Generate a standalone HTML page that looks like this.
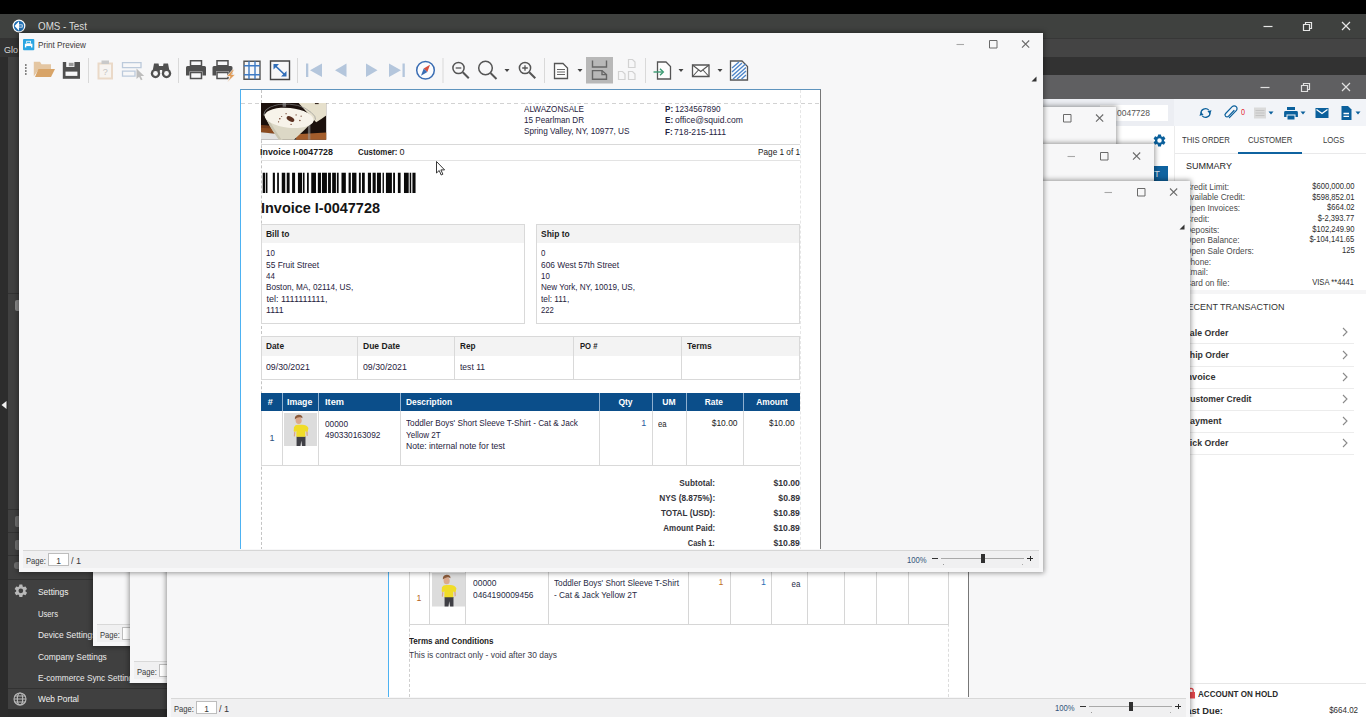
<!DOCTYPE html>
<html>
<head>
<meta charset="utf-8">
<title>OMS - Test</title>
<style>
*{box-sizing:border-box;margin:0;padding:0}
html,body{width:1366px;height:717px;overflow:hidden;background:#2a2a2a}
body{font-family:"Liberation Sans",sans-serif;font-size:11px;color:#222;position:relative}
.a{position:absolute}
.t{position:absolute;white-space:nowrap;line-height:1}
.win{position:absolute;width:1023px;height:539px;background:#f7f7f8;box-shadow:0 0 5px 1px rgba(0,0,0,.4)}
.sb{position:absolute;left:4px;right:4px;bottom:4px;height:18px;background:#f0f0f1;border-top:1px solid #d8d8d8}
.pg{position:absolute;background:#fff}
svg{position:absolute;overflow:visible}
</style>
</head>
<body>
<!-- OMS main window chrome -->
<div class="a" style="left:0px;top:0px;width:1366px;height:14px;background:#000;"></div>
<div class="a" style="left:0px;top:14px;width:1366px;height:24px;background:#3f413f;"></div>
<div class="a" style="left:0px;top:38px;width:1366px;height:19.5px;background:#444;"></div>
<div class="a" style="left:0px;top:38px;width:1366px;height:1px;background:#373737;"></div>
<div class="a" style="left:0px;top:38px;width:40px;height:19px;background:#333;"></div>
<div class="a" style="left:0px;top:57px;width:1366px;height:18px;background:#323232;"></div>
<div class="a" style="left:0px;top:75px;width:1366px;height:24px;background:#5f5f61;"></div>
<div class="a" style="left:1043px;top:99px;width:131px;height:27px;background:#eceef3;"></div>
<div class="a" style="left:1174px;top:99px;width:192px;height:27px;background:#f2f4f8;"></div>
<svg style="left:12px;top:19px" width="14" height="14" viewBox="0 0 14 14"><circle cx="7" cy="7" r="6.4" fill="#fff"/><circle cx="7" cy="7" r="5.2" fill="#1f6fb4"/><path d="M7 2.2 L2.6 7 L7 11.8 L7 8.6 L10.6 8.6 L10.6 5.4 L7 5.4 Z" fill="#fff"/><path d="M7.2 6.2h2.6v1.6H7.2z" fill="#1f6fb4"/></svg>
<div class="t" style="top:21.8px;font-size:10.2px;color:#dedede;left:38.0px;transform:scaleX(0.964);transform-origin:0 50%;">OMS - Test</div>
<div class="t" style="top:44.9px;font-size:9.5px;color:#d8d8d8;left:4.0px;transform:scaleX(0.947);transform-origin:0 50%;">Glo</div>
<svg style="left:1255px;top:16px" width="105" height="20" viewBox="0 0 105 20" fill="none" stroke="#e6e6e6" stroke-width="1.2">
<path d="M8.5 10.5h9"/><path d="M48.500 8.500h6v6h-6z M50.500 8.500v-2h6v6h-2"/><path d="M87 6l8 8M95 6l-8 8"/></svg>
<svg style="left:1252px;top:77px" width="108" height="20" viewBox="0 0 108 20" fill="none" stroke="#e0e0e0" stroke-width="1.2">
<path d="M8.500 10.500h9"/><path d="M49.500 8.500h6v6h-6z M51.500 8.500v-2h6v6h-2"/><path d="M90 6l8 8M98 6l-8 8"/></svg>
<div class="a" style="left:1100px;top:105px;width:68px;height:16px;background:#fff;"></div>
<div class="t" style="top:108.4px;font-size:9.5px;color:#555;left:1117.0px;transform:scaleX(0.892);transform-origin:0 50%;">0047728</div>
<svg style="left:1196px;top:103px" width="170" height="20" viewBox="0 0 170 20">
 <g fill="none" stroke="#0b609c" stroke-width="1.200"><path d="M5 10.500a4.500 4.300 0 0 1 7.800-3.400"/><path d="M14 9.500a4.500 4.300 0 0 1-7.800 3.400"/></g>
 <path d="M15.600 7.200l-1.600 4-2.600-3.200z M3.400 12.800l1.600-4 2.600 3.200z" fill="#0b609c"/>
 <path d="M38 7.500l-5.600 5.800a1.900 1.900 0 0 1-2.800-2.800l6.600-6.800a2.800 2.800 0 0 1 4 4l-6.800 7" fill="none" stroke="#0b609c" stroke-width="1.200" stroke-linecap="round"/>
 <path d="M58 4.500h12v11H58z" fill="#dadada"/><path d="M59.500 7.500h9M59.500 10h9M59.500 12.500h9" stroke="#c4c4c4" stroke-width="1.100"/>
 <path d="M72.500 8.500h5l-2.500 3z" fill="#0b609c"/>
 <path d="M89.500 8h11a1.400 1.400 0 0 1 1.400 1.400v4.600h-2.400v-2.500h-9v2.500h-2.400v-4.600a1.400 1.400 0 0 1 1.400-1.400z M91 4h8v3h-8z M91.500 12.500h7v4h-7z" fill="#0b609c"/>
 <path d="M104.500 8.500h5l-2.500 3z" fill="#0b609c"/>
 <path d="M119.500 5h13v10h-13z" fill="#0b609c"/><path d="M120.500 6.500l5.500 4 5.500-4" stroke="#fff" stroke-width="1.300" fill="none"/>
 <path d="M145.500 3h6.500l3.500 3.500v10.500h-10z" fill="#0b609c"/><path d="M147.500 10.500h5.500M147.500 13.300h5.500" stroke="#fff" stroke-width="1.300"/>
 <path d="M159.500 8.500h5l-2.500 3z" fill="#0b609c"/>
</svg>
<div class="t" style="top:108.3px;font-size:8.5px;color:#e3262e;left:1240.5px;transform:scaleX(0.850);transform-origin:0 50%;">0</div>
<!-- left sidebar -->
<div class="a" style="left:0px;top:57px;width:8px;height:660px;background:#2c2c2c;"></div>
<div class="a" style="left:8px;top:57px;width:160px;height:652px;background:#404040;"></div>
<div class="a" style="left:8px;top:709px;width:160px;height:8px;background:#2b2b2b;"></div>
<div class="a" style="left:8px;top:578.5px;width:122px;height:1px;background:#323232;"></div>
<div class="a" style="left:8px;top:688px;width:160px;height:1px;background:#323232;"></div>
<div class="a" style="left:8px;top:293px;width:12px;height:1px;background:#323232;"></div>
<div class="a" style="left:8px;top:508.5px;width:12px;height:1px;background:#323232;"></div>
<div class="a" style="left:8px;top:532px;width:12px;height:1px;background:#323232;"></div>
<div class="a" style="left:8px;top:555.3px;width:12px;height:1px;background:#323232;"></div>
<svg style="left:0;top:400px" width="8" height="10" viewBox="0 0 8 10"><path d="M6.500 1v8L1.500 5z" fill="#f0f0f0"/></svg>
<div class="a" style="left:14.5px;top:299.5px;width:5px;height:11px;background:#8a8a8a;border-radius:2px 0 0 2px"></div>
<div class="a" style="left:15px;top:516px;width:4px;height:11px;background:#6f6f6f;border-radius:2px 0 0 2px"></div>
<div class="a" style="left:15px;top:539.5px;width:4px;height:10px;background:#6f6f6f;border-radius:2px 0 0 2px"></div>
<div class="a" style="left:14px;top:562px;width:5px;height:7px;background:#6f6f6f;border-radius:3px 0 0 3px"></div>
<svg style="left:13px;top:583.400px" width="15.700" height="15.700" viewBox="0 0 24 24"><path fill="#b9b9b9" d="M19.140 12.940a7.400 7.400 0 0 0 .050-.940 7.400 7.400 0 0 0-.060-.940l2.030-1.580a.490.490 0 0 0 .120-.610l-1.920-3.320a.490.490 0 0 0-.590-.220l-2.390.960a7 7 0 0 0-1.620-.940l-.360-2.540a.480.480 0 0 0-.480-.410h-3.840a.480.480 0 0 0-.470.410l-.360 2.540a7.300 7.300 0 0 0-1.620.940l-2.390-.960a.480.480 0 0 0-.590.220L2.740 8.870a.480.480 0 0 0 .120.610l2.030 1.580a7.400 7.400 0 0 0-.070.940c0 .320.020.640.070.940l-2.030 1.580a.490.490 0 0 0-.120.610l1.920 3.320c.120.220.370.290.590.220l2.390-.960c.500.380 1.030.700 1.620.940l.360 2.540c.050.240.240.410.480.410h3.840c.240 0 .440-.170.470-.410l.360-2.540a7.300 7.300 0 0 0 1.620-.940l2.390.960c.220.080.470 0 .590-.220l1.920-3.320a.480.480 0 0 0-.120-.610zM12 15.600A3.600 3.600 0 1 1 12 8.400a3.600 3.600 0 0 1 0 7.200z"/></svg>
<svg style="left:13px;top:692px" width="14" height="14" viewBox="0 0 14 14" fill="none" stroke="#b9b9b9" stroke-width="1.100"><circle cx="7" cy="7" r="6"/><ellipse cx="7" cy="7" rx="2.700" ry="6"/><path d="M1 7h12M1.800 4h10.400M1.800 10h10.400"/></svg>
<div class="t" style="top:586.8px;font-size:9.6px;color:#f2f2f2;left:38.0px;transform:scaleX(0.879);transform-origin:0 50%;">Settings</div>
<div class="t" style="top:608.8px;font-size:9.4px;color:#ececec;left:38.4px;transform:scaleX(0.815);transform-origin:0 50%;">Users</div>
<div class="t" style="top:630.4px;font-size:9.4px;color:#ececec;left:38.4px;transform:scaleX(0.896);transform-origin:0 50%;">Device Settings</div>
<div class="t" style="top:652.0px;font-size:9.4px;color:#ececec;left:38.4px;transform:scaleX(0.898);transform-origin:0 50%;">Company Settings</div>
<div class="t" style="top:673.1px;font-size:9.4px;color:#ececec;left:38.4px;transform:scaleX(0.878);transform-origin:0 50%;">E-commerce Sync Settings</div>
<div class="t" style="top:694.3px;font-size:9.6px;color:#f2f2f2;left:38.4px;transform:scaleX(0.866);transform-origin:0 50%;">Web Portal</div>
<!-- order window right panel -->
<div class="a" style="left:1043px;top:126px;width:131px;height:591px;background:#fff;"></div>
<div class="a" style="left:1174px;top:126px;width:192px;height:591px;background:#fff;"></div>
<div class="a" style="left:1174px;top:126px;width:1px;height:591px;background:#ececec;"></div>
<svg style="left:1152px;top:133px" width="15" height="15" viewBox="0 0 24 24"><path fill="#0b609c" d="M19.140 12.940a7.400 7.400 0 0 0 .050-.940 7.400 7.400 0 0 0-.060-.940l2.030-1.580a.490.490 0 0 0 .120-.610l-1.920-3.320a.490.490 0 0 0-.590-.220l-2.390.960a7 7 0 0 0-1.620-.940l-.360-2.540a.480.480 0 0 0-.480-.410h-3.840a.480.480 0 0 0-.470.410l-.360 2.540a7.300 7.300 0 0 0-1.620.940l-2.390-.960a.480.480 0 0 0-.590.220L2.740 8.870a.480.480 0 0 0 .120.610l2.030 1.580a7.400 7.400 0 0 0-.070.940c0 .320.020.640.070.940l-2.030 1.580a.490.490 0 0 0-.120.610l1.920 3.320c.120.220.370.290.590.220l2.390-.960c.500.380 1.030.700 1.620.940l.360 2.540c.050.240.240.410.480.410h3.840c.240 0 .440-.170.470-.410l.360-2.540a7.300 7.300 0 0 0 1.620-.940l2.390.960c.220.080.470 0 .590-.220l1.920-3.320a.480.480 0 0 0-.120-.610zM12 15.600A3.600 3.600 0 1 1 12 8.400a3.600 3.600 0 0 1 0 7.200z"/></svg>
<div class="a" style="left:1140px;top:166px;width:28px;height:16px;background:#0f63a0;"></div>
<div class="t" style="top:169.4px;font-size:9.5px;color:#dfe9f3;left:1154.0px;">T</div>
<div class="t" style="top:135.0px;font-size:9.4px;color:#3b3b3b;left:1182.4px;transform:scaleX(0.828);transform-origin:0 50%;">THIS ORDER</div>
<div class="t" style="top:135.0px;font-size:9.4px;color:#3b3b3b;left:1248.0px;transform:scaleX(0.830);transform-origin:0 50%;">CUSTOMER</div>
<div class="t" style="top:135.0px;font-size:9.4px;color:#3b3b3b;left:1323.0px;transform:scaleX(0.823);transform-origin:0 50%;">LOGS</div>
<div class="a" style="left:1175px;top:153px;width:191px;height:1px;background:#e9e9ea;"></div>
<div class="a" style="left:1238px;top:152px;width:64px;height:2px;background:#0f63a0;"></div>
<div class="t" style="top:161.2px;font-size:9.8px;color:#262626;left:1186.0px;transform:scaleX(0.921);transform-origin:0 50%;">SUMMARY</div>
<div class="t" style="top:182.7px;font-size:8.3px;color:#4a4a4a;left:1184.5px;transform:scaleX(0.995);transform-origin:0 50%;">Credit Limit:</div>
<div class="t" style="top:182.8px;font-size:8.2px;color:#2d2d2d;right:11.5px;transform:scaleX(0.930);transform-origin:100% 50%;">$600,000.00</div>
<div class="t" style="top:193.4px;font-size:8.3px;color:#4a4a4a;left:1184.5px;transform:scaleX(0.995);transform-origin:0 50%;">Available Credit:</div>
<div class="t" style="top:193.5px;font-size:8.2px;color:#2d2d2d;right:11.5px;transform:scaleX(0.930);transform-origin:100% 50%;">$598,852.01</div>
<div class="t" style="top:204.1px;font-size:8.3px;color:#4a4a4a;left:1184.5px;transform:scaleX(0.995);transform-origin:0 50%;">Open Invoices:</div>
<div class="t" style="top:204.2px;font-size:8.2px;color:#2d2d2d;right:11.5px;transform:scaleX(0.930);transform-origin:100% 50%;">$664.02</div>
<div class="t" style="top:214.8px;font-size:8.3px;color:#4a4a4a;left:1184.5px;transform:scaleX(0.995);transform-origin:0 50%;">Credit:</div>
<div class="t" style="top:214.9px;font-size:8.2px;color:#2d2d2d;right:11.5px;transform:scaleX(0.930);transform-origin:100% 50%;">$-2,393.77</div>
<div class="t" style="top:225.5px;font-size:8.3px;color:#4a4a4a;left:1184.5px;transform:scaleX(0.995);transform-origin:0 50%;">Deposits:</div>
<div class="t" style="top:225.6px;font-size:8.2px;color:#2d2d2d;right:11.5px;transform:scaleX(0.930);transform-origin:100% 50%;">$102,249.90</div>
<div class="t" style="top:236.2px;font-size:8.3px;color:#4a4a4a;left:1184.5px;transform:scaleX(0.995);transform-origin:0 50%;">Open Balance:</div>
<div class="t" style="top:236.3px;font-size:8.2px;color:#2d2d2d;right:11.5px;transform:scaleX(0.930);transform-origin:100% 50%;">$-104,141.65</div>
<div class="t" style="top:246.9px;font-size:8.3px;color:#4a4a4a;left:1184.5px;transform:scaleX(0.995);transform-origin:0 50%;">Open Sale Orders:</div>
<div class="t" style="top:247.0px;font-size:8.2px;color:#2d2d2d;right:11.5px;transform:scaleX(0.930);transform-origin:100% 50%;">125</div>
<div class="t" style="top:257.6px;font-size:8.3px;color:#4a4a4a;left:1184.5px;transform:scaleX(0.995);transform-origin:0 50%;">Phone:</div>
<div class="t" style="top:268.3px;font-size:8.3px;color:#4a4a4a;left:1184.5px;transform:scaleX(0.995);transform-origin:0 50%;">Email:</div>
<div class="t" style="top:279.0px;font-size:8.3px;color:#4a4a4a;left:1184.5px;transform:scaleX(0.995);transform-origin:0 50%;">Card on file:</div>
<div class="t" style="top:279.1px;font-size:8.2px;color:#2d2d2d;right:11.5px;transform:scaleX(0.930);transform-origin:100% 50%;">VISA **4441</div>
<div class="a" style="left:1175px;top:290px;width:191px;height:3.5px;background:#f5f5f6;"></div>
<div class="t" style="top:301.9px;font-size:9.6px;color:#333;left:1180.5px;transform:scaleX(0.936);transform-origin:0 50%;">RECENT TRANSACTION</div>
<div class="t" style="top:327.6px;font-size:9.8px;color:#333;font-weight:bold;left:1184.0px;transform:scaleX(0.894);transform-origin:0 50%;">Sale Order</div>
<svg style="left:1341px;top:327.4px" width="8" height="10" viewBox="0 0 8 10" fill="none" stroke="#8a8a8a" stroke-width="1.1"><path d="M2 1l4 4-4 4"/></svg>
<div class="a" style="left:1182px;top:343.4px;width:172px;height:1px;background:#ececec;"></div>
<div class="t" style="top:349.8px;font-size:9.8px;color:#333;font-weight:bold;left:1184.0px;transform:scaleX(0.889);transform-origin:0 50%;">Ship Order</div>
<svg style="left:1341px;top:349.54999999999995px" width="8" height="10" viewBox="0 0 8 10" fill="none" stroke="#8a8a8a" stroke-width="1.1"><path d="M2 1l4 4-4 4"/></svg>
<div class="a" style="left:1182px;top:365.54999999999995px;width:172px;height:1px;background:#ececec;"></div>
<div class="t" style="top:371.9px;font-size:9.8px;color:#333;font-weight:bold;left:1184.0px;transform:scaleX(0.933);transform-origin:0 50%;">Invoice</div>
<svg style="left:1341px;top:371.7px" width="8" height="10" viewBox="0 0 8 10" fill="none" stroke="#8a8a8a" stroke-width="1.1"><path d="M2 1l4 4-4 4"/></svg>
<div class="a" style="left:1182px;top:387.7px;width:172px;height:1px;background:#ececec;"></div>
<div class="t" style="top:394.1px;font-size:9.8px;color:#333;font-weight:bold;left:1184.0px;transform:scaleX(0.878);transform-origin:0 50%;">Customer Credit</div>
<svg style="left:1341px;top:393.84999999999997px" width="8" height="10" viewBox="0 0 8 10" fill="none" stroke="#8a8a8a" stroke-width="1.1"><path d="M2 1l4 4-4 4"/></svg>
<div class="a" style="left:1182px;top:409.84999999999997px;width:172px;height:1px;background:#ececec;"></div>
<div class="t" style="top:416.2px;font-size:9.8px;color:#333;font-weight:bold;left:1184.0px;transform:scaleX(0.920);transform-origin:0 50%;">Payment</div>
<svg style="left:1341px;top:416.0px" width="8" height="10" viewBox="0 0 8 10" fill="none" stroke="#8a8a8a" stroke-width="1.1"><path d="M2 1l4 4-4 4"/></svg>
<div class="a" style="left:1182px;top:432.0px;width:172px;height:1px;background:#ececec;"></div>
<div class="t" style="top:438.4px;font-size:9.8px;color:#333;font-weight:bold;left:1184.0px;transform:scaleX(0.894);transform-origin:0 50%;">Pick Order</div>
<svg style="left:1341px;top:438.15px" width="8" height="10" viewBox="0 0 8 10" fill="none" stroke="#8a8a8a" stroke-width="1.1"><path d="M2 1l4 4-4 4"/></svg>
<div class="a" style="left:1182px;top:454.15px;width:172px;height:1px;background:#ececec;"></div>
<div class="a" style="left:1175px;top:683px;width:191px;height:1px;background:#e6e6e6;"></div>
<svg style="left:1186px;top:687px" width="10" height="12" viewBox="0 0 10 12"><path d="M1 5h8v6.500H1z" fill="#e5484d"/><path d="M2.800 5V3.500a2.200 2.200 0 0 1 4.400 0V5" fill="none" stroke="#e5484d" stroke-width="1.300"/></svg>
<div class="t" style="top:688.5px;font-size:9.6px;color:#2b2b2b;font-weight:bold;left:1198.3px;transform:scaleX(0.843);transform-origin:0 50%;">ACCOUNT ON HOLD</div>
<div class="t" style="top:705.9px;font-size:9.6px;color:#2b2b2b;font-weight:bold;left:1180.0px;transform:scaleX(0.971);transform-origin:0 50%;">Past Due:</div>
<div class="t" style="top:706.4px;font-size:8.6px;color:#2d2d2d;right:8.0px;transform:scaleX(0.930);transform-origin:100% 50%;">$664.02</div>
<!-- print preview window 2 -->
<div class="win" style="left:93px;top:107px;width:1023px"><div class="sb"></div></div>
<svg style="left:1028px;top:111.7px" width="80" height="12" viewBox="0 0 80 12" fill="none" stroke="#6a6a6a" stroke-width="1.100"><path d="M2.500 6.500h7.500" stroke="#a8a8a8"/><path d="M35.500 2.500h7.500v7.500h-7.500z" stroke-width="1"/><path d="M68 2.500l7.200 7.200M75.200 2.500l-7.200 7.200"/></svg>
<svg style="left:1105px;top:149.2px" width="6" height="6" viewBox="0 0 6 6"><path d="M5.500 .5v5h-5z" fill="#333"/></svg>
<div class="t" style="top:629.9px;font-size:9.6px;color:#3a3a3a;left:99.8px;transform:scaleX(0.789);transform-origin:0 50%;">Page:</div>
<div class="a" style="left:121.8px;top:627.2px;width:20.8px;height:12.6px;background:#fff;border:1px solid #bdbdbd"></div>
<div class="t" style="top:629.8px;font-size:9.4px;color:#3a3a3a;left:129.6px;transform:scaleX(0.900);transform-origin:50% 50%;">1</div>
<div class="t" style="top:629.9px;font-size:9.6px;color:#3a3a3a;left:145.0px;transform:scaleX(0.955);transform-origin:0 50%;">/ 1</div>
<div class="t" style="top:630.1px;font-size:9.2px;color:#33547a;left:981.4px;transform:scaleX(0.833);transform-origin:0 50%;">100%</div>
<div class="a" style="left:1006.4px;top:631.8px;width:5.4px;height:1px;background:#333;"></div>
<div class="a" style="left:1015.3px;top:631.8px;width:82.4px;height:1px;background:#a9a9a9;"></div>
<div class="a" style="left:1017.3px;top:638.3px;width:1px;height:1px;background:#999;"></div>
<div class="a" style="left:1095.7px;top:638.3px;width:1px;height:1px;background:#aaa;"></div>
<div class="a" style="left:1055.2px;top:627.8px;width:3.8px;height:9px;background:#303030;"></div>
<div class="a" style="left:1101.3px;top:631.8px;width:5.6px;height:1px;background:#2a2a2a;"></div>
<div class="a" style="left:1103.6px;top:629.5px;width:1px;height:5.6px;background:#2a2a2a;"></div>
<!-- print preview window 3 -->
<div class="win" style="left:130px;top:144px;width:1023.5px"><div class="sb"></div></div>
<svg style="left:1065px;top:149.5px" width="80" height="12" viewBox="0 0 80 12" fill="none" stroke="#6a6a6a" stroke-width="1.100"><path d="M2.500 6.500h7.500" stroke="#a8a8a8"/><path d="M35.500 2.500h7.500v7.500h-7.500z" stroke-width="1"/><path d="M68 2.500l7.200 7.200M75.200 2.500l-7.200 7.200"/></svg>
<svg style="left:1142px;top:187px" width="6" height="6" viewBox="0 0 6 6"><path d="M5.500 .5v5h-5z" fill="#333"/></svg>
<div class="t" style="top:666.9px;font-size:9.6px;color:#3a3a3a;left:136.8px;transform:scaleX(0.789);transform-origin:0 50%;">Page:</div>
<div class="a" style="left:158.8px;top:664.2px;width:20.8px;height:12.6px;background:#fff;border:1px solid #bdbdbd"></div>
<div class="t" style="top:666.8px;font-size:9.4px;color:#3a3a3a;left:166.6px;transform:scaleX(0.900);transform-origin:50% 50%;">1</div>
<div class="t" style="top:666.9px;font-size:9.6px;color:#3a3a3a;left:182.0px;transform:scaleX(0.955);transform-origin:0 50%;">/ 1</div>
<div class="t" style="top:667.1px;font-size:9.2px;color:#33547a;left:1018.4px;transform:scaleX(0.833);transform-origin:0 50%;">100%</div>
<div class="a" style="left:1043.4px;top:668.8px;width:5.4px;height:1px;background:#333;"></div>
<div class="a" style="left:1052.3px;top:668.8px;width:82.4px;height:1px;background:#a9a9a9;"></div>
<div class="a" style="left:1054.3px;top:675.3px;width:1px;height:1px;background:#999;"></div>
<div class="a" style="left:1132.7px;top:675.3px;width:1px;height:1px;background:#aaa;"></div>
<div class="a" style="left:1092.2px;top:664.8px;width:3.8px;height:9px;background:#303030;"></div>
<div class="a" style="left:1138.3px;top:668.8px;width:5.6px;height:1px;background:#2a2a2a;"></div>
<div class="a" style="left:1140.6px;top:666.5px;width:1px;height:5.6px;background:#2a2a2a;"></div>
<!-- print preview window 4 -->
<div class="win" style="left:167px;top:181px;width:1023px"><div class="sb"></div></div>
<svg style="left:1102px;top:186.0px" width="80" height="12" viewBox="0 0 80 12" fill="none" stroke="#6a6a6a" stroke-width="1.100"><path d="M2.500 6.500h7.500" stroke="#a8a8a8"/><path d="M35.500 2.500h7.500v7.500h-7.500z" stroke-width="1"/><path d="M68 2.500l7.200 7.200M75.200 2.500l-7.200 7.200"/></svg>
<svg style="left:1179px;top:223.5px" width="6" height="6" viewBox="0 0 6 6"><path d="M5.500 .5v5h-5z" fill="#333"/></svg>
<div class="t" style="top:703.9px;font-size:9.6px;color:#3a3a3a;left:173.8px;transform:scaleX(0.789);transform-origin:0 50%;">Page:</div>
<div class="a" style="left:195.8px;top:701.2px;width:20.8px;height:12.6px;background:#fff;border:1px solid #bdbdbd"></div>
<div class="t" style="top:703.8px;font-size:9.4px;color:#3a3a3a;left:203.6px;transform:scaleX(0.900);transform-origin:50% 50%;">1</div>
<div class="t" style="top:703.9px;font-size:9.6px;color:#3a3a3a;left:219.0px;transform:scaleX(0.955);transform-origin:0 50%;">/ 1</div>
<div class="t" style="top:704.1px;font-size:9.2px;color:#33547a;left:1055.4px;transform:scaleX(0.833);transform-origin:0 50%;">100%</div>
<div class="a" style="left:1080.4px;top:705.8px;width:5.4px;height:1px;background:#333;"></div>
<div class="a" style="left:1089.3px;top:705.8px;width:82.4px;height:1px;background:#a9a9a9;"></div>
<div class="a" style="left:1091.3px;top:712.3px;width:1px;height:1px;background:#999;"></div>
<div class="a" style="left:1169.7px;top:712.3px;width:1px;height:1px;background:#aaa;"></div>
<div class="a" style="left:1129.2px;top:701.8px;width:3.8px;height:9px;background:#303030;"></div>
<div class="a" style="left:1175.3px;top:705.8px;width:5.6px;height:1px;background:#2a2a2a;"></div>
<div class="a" style="left:1177.6px;top:703.5px;width:1px;height:5.6px;background:#2a2a2a;"></div>
<div class="a" style="left:388px;top:237px;width:581px;height:461px;background:#fff;border-left:1px solid #4db2f2;border-right:1px solid #777"></div>
<div class="a" style="left:409px;top:237px;width:1px;height:460px;background:transparent;border-left:1px dashed #cfcfcf"></div>
<div class="a" style="left:948px;top:237px;width:1px;height:460px;background:transparent;border-left:1px dashed #dcdcdc"></div>
<div class="a" style="left:409px;top:560px;width:1px;height:65px;background:#d6d6d6;"></div>
<div class="a" style="left:429px;top:560px;width:1px;height:65px;background:#d6d6d6;"></div>
<div class="a" style="left:465px;top:560px;width:1px;height:65px;background:#d6d6d6;"></div>
<div class="a" style="left:548px;top:560px;width:1px;height:65px;background:#d6d6d6;"></div>
<div class="a" style="left:688px;top:560px;width:1px;height:65px;background:#d6d6d6;"></div>
<div class="a" style="left:730px;top:560px;width:1px;height:65px;background:#d6d6d6;"></div>
<div class="a" style="left:771px;top:560px;width:1px;height:65px;background:#d6d6d6;"></div>
<div class="a" style="left:807px;top:560px;width:1px;height:65px;background:#d6d6d6;"></div>
<div class="a" style="left:844px;top:560px;width:1px;height:65px;background:#d6d6d6;"></div>
<div class="a" style="left:876px;top:560px;width:1px;height:65px;background:#d6d6d6;"></div>
<div class="a" style="left:908px;top:560px;width:1px;height:65px;background:#d6d6d6;"></div>
<div class="a" style="left:948px;top:560px;width:1px;height:65px;background:#d6d6d6;"></div>
<div class="a" style="left:409px;top:624px;width:540px;height:1px;background:#d6d6d6;"></div>
<div class="t" style="top:593.7px;font-size:8.8px;color:#b5651d;left:416.5px;">1</div>
<svg style="left:431.500px;top:572.500px" width="33" height="33.500" viewBox="0 0 315 315" preserveAspectRatio="none"><rect width="315" height="315" fill="#dcdcdc"/><path d="M120 225h85v90h-32l-8-50-8 50h-37z" fill="#3f3f45"/><path d="M95 135q10-22 40-22h40q40 0 58 30l-8 40-22-8v52h-85v-55l-12 10-14-8z" fill="#f0dc28"/><path d="M97 178l12 6-4 40-12-2z M212 176l14 6 2 34-12 4z" fill="#d9a58a"/><ellipse cx="140" cy="72" rx="29" ry="33" fill="#dba98d"/><path d="M104 62q-6-42 36-46q40 0 36 34q-20-14-44-6q-16 6-28 18z" fill="#8a5a3a"/></svg>
<div class="t" style="top:579.2px;font-size:8.8px;color:#1f2a44;left:473.0px;transform:scaleX(0.960);transform-origin:0 50%;">00000</div>
<div class="t" style="top:590.7px;font-size:8.8px;color:#1f2a44;left:473.0px;transform:scaleX(0.951);transform-origin:0 50%;">0464190009456</div>
<div class="t" style="top:579.2px;font-size:8.8px;color:#1f2a44;left:553.5px;transform:scaleX(0.936);transform-origin:0 50%;">Toddler Boys' Short Sleeve T-Shirt</div>
<div class="t" style="top:590.7px;font-size:8.8px;color:#1f2a44;left:553.5px;transform:scaleX(0.943);transform-origin:0 50%;">- Cat &amp; Jack Yellow 2T</div>
<div class="t" style="top:578.0px;font-size:8.8px;color:#c0711f;left:718.6px;">1</div>
<div class="t" style="top:578.0px;font-size:8.8px;color:#2f6fb5;left:761.1px;">1</div>
<div class="t" style="top:579.5px;font-size:8.8px;color:#1f2a44;left:791.1px;transform:scaleX(0.900);transform-origin:50% 50%;">ea</div>
<div class="t" style="top:637.4px;font-size:9px;color:#222;font-weight:bold;left:408.8px;transform:scaleX(0.896);transform-origin:0 50%;">Terms and Conditions</div>
<div class="t" style="top:650.5px;font-size:8.8px;color:#3a3a4a;left:408.8px;transform:scaleX(0.955);transform-origin:0 50%;">This is contract only - void after 30 days</div>
<div class="a" style="left:167px;top:697px;width:1023px;height:20px;background:#f7f7f8;"></div>
<div class="a" style="left:171px;top:698px;width:1015px;height:19px;background:#f0f0f1;border-top:1px solid #d8d8d8"></div>
<div class="t" style="top:703.9px;font-size:9.6px;color:#3a3a3a;left:173.8px;transform:scaleX(0.789);transform-origin:0 50%;">Page:</div>
<div class="a" style="left:195.8px;top:701.2px;width:20.8px;height:12.6px;background:#fff;border:1px solid #bdbdbd"></div>
<div class="t" style="top:703.8px;font-size:9.4px;color:#3a3a3a;left:203.6px;transform:scaleX(0.900);transform-origin:50% 50%;">1</div>
<div class="t" style="top:703.9px;font-size:9.6px;color:#3a3a3a;left:219.0px;transform:scaleX(0.955);transform-origin:0 50%;">/ 1</div>
<div class="t" style="top:704.1px;font-size:9.2px;color:#33547a;left:1055.4px;transform:scaleX(0.833);transform-origin:0 50%;">100%</div>
<div class="a" style="left:1080.4px;top:705.8px;width:5.4px;height:1px;background:#333;"></div>
<div class="a" style="left:1089.3px;top:705.8px;width:82.4px;height:1px;background:#a9a9a9;"></div>
<div class="a" style="left:1091.3px;top:712.3px;width:1px;height:1px;background:#999;"></div>
<div class="a" style="left:1169.7px;top:712.3px;width:1px;height:1px;background:#aaa;"></div>
<div class="a" style="left:1129.2px;top:701.8px;width:3.8px;height:9px;background:#303030;"></div>
<div class="a" style="left:1175.3px;top:705.8px;width:5.6px;height:1px;background:#2a2a2a;"></div>
<div class="a" style="left:1177.6px;top:703.5px;width:1px;height:5.6px;background:#2a2a2a;"></div>
<!-- print preview window 1 (front) -->
<div class="win" style="left:19px;top:32.7px;width:1024px"><div class="sb"></div></div>
<svg style="left:954px;top:38.2px" width="80" height="12" viewBox="0 0 80 12" fill="none" stroke="#6a6a6a" stroke-width="1.100"><path d="M2.500 6.500h7.500" stroke="#a8a8a8"/><path d="M35.500 2.500h7.500v7.500h-7.500z" stroke-width="1"/><path d="M68 2.500l7.200 7.200M75.200 2.500l-7.200 7.200"/></svg>
<svg style="left:1031px;top:75.7px" width="6" height="6" viewBox="0 0 6 6"><path d="M5.500 .5v5h-5z" fill="#333"/></svg>
<div class="t" style="top:555.6px;font-size:9.6px;color:#3a3a3a;left:25.8px;transform:scaleX(0.789);transform-origin:0 50%;">Page:</div>
<div class="a" style="left:47.8px;top:552.9000000000001px;width:20.8px;height:12.6px;background:#fff;border:1px solid #bdbdbd"></div>
<div class="t" style="top:555.5px;font-size:9.4px;color:#3a3a3a;left:55.6px;transform:scaleX(0.900);transform-origin:50% 50%;">1</div>
<div class="t" style="top:555.6px;font-size:9.6px;color:#3a3a3a;left:71.0px;transform:scaleX(0.955);transform-origin:0 50%;">/ 1</div>
<div class="t" style="top:555.8px;font-size:9.2px;color:#33547a;left:907.4px;transform:scaleX(0.833);transform-origin:0 50%;">100%</div>
<div class="a" style="left:932.4px;top:557.5px;width:5.4px;height:1px;background:#333;"></div>
<div class="a" style="left:941.3px;top:557.5px;width:82.4px;height:1px;background:#a9a9a9;"></div>
<div class="a" style="left:943.3px;top:564.0px;width:1px;height:1px;background:#999;"></div>
<div class="a" style="left:1021.7px;top:564.0px;width:1px;height:1px;background:#aaa;"></div>
<div class="a" style="left:981.2px;top:553.5px;width:3.8px;height:9px;background:#303030;"></div>
<div class="a" style="left:1027.3px;top:557.5px;width:5.6px;height:1px;background:#2a2a2a;"></div>
<div class="a" style="left:1029.6px;top:555.2px;width:1px;height:5.6px;background:#2a2a2a;"></div>
<svg style="left:22.800px;top:38.800px" width="11.300" height="11.300" viewBox="0 0 12 12"><rect width="12" height="12" rx="1" fill="#2aa5e2"/><path d="M3.500 2h5v3h-5z" fill="#fff"/><path d="M2 5h8v4H2z" fill="#fff"/><path d="M3.500 7.500h5v2.500h-5z" fill="#2aa5e2"/><path d="M4.300 2.800h3.400v1.400H4.300z" fill="#2aa5e2"/></svg>
<div class="t" style="top:40.7px;font-size:8.8px;color:#3f3a3a;left:38.0px;transform:scaleX(0.926);transform-origin:0 50%;">Print Preview</div>
<svg style="left:19px;top:55px" width="760" height="32" viewBox="0 0 760 32">
<g fill="#666"><rect x="6" y="9.200" width="1.600" height="1.600"/><rect x="6" y="12.200" width="1.600" height="1.600"/><rect x="6" y="15.200" width="1.600" height="1.600"/><rect x="6" y="18.200" width="1.600" height="1.600"/></g>
<!-- open folder -->
<path d="M14.800 6.700h6.200l1.500 2.600h9.500v5h-12l-5.200 7z" fill="#e4c6a2"/><path d="M19.400 14.100h16.600l-4 7.900h-16z" fill="#d8a468"/>
<!-- save -->
<path d="M43.800 7h17.200v16.800h-17.200z" fill="#4f4f4f"/><path d="M47.200 7h8.200v5h-8.200z" fill="#f7f7f8"/><path d="M49.800 7.800h4.800v3.400h-4.800z" fill="#9a9a9a"/><path d="M46.500 16.600h11.900v4.300h-11.900z" fill="#f7f7f8"/>
<path d="M69.500 3v25M159.500 3v25M278.500 3v25M424 3v25M525.500 3v25M626.500 3v25" stroke="#d9d9d9" stroke-width="1" fill="none"/>
<!-- clipboard (disabled) -->
<path d="M78.500 7.500h15.500v17h-15.500z" fill="#ead9c8"/><path d="M80.500 9.500h11.500v13h-11.500z" fill="#f7f4f1"/><path d="M82.500 5.500h7.500v3.500h-7.500z" fill="#c9c9c9"/><text x="86.300" y="20" font-size="9" fill="#c4c4c4" text-anchor="middle" font-family="Liberation Sans, sans-serif">?</text>
<!-- select (disabled) -->
<g fill="none" stroke="#bccadb" stroke-width="1.300"><path d="M103.500 7.700h18.500v5h-18.500z"/><path d="M103.500 16.200h12.500v5h-12.500z"/></g><path d="M117.500 13.500v10.500l2.600-2.200 1.800 3.400 1.600-.800-1.800-3.400h3.500z" fill="#bdbdbd"/>
<!-- binoculars -->
<g fill="#505050"><path d="M135 8.500h4.500l1.500 8h-7.500z"/><path d="M144.500 8.500h4.500l1.500 8h-7.500z"/><rect x="139.500" y="11" width="5" height="4"/><circle cx="136.500" cy="18.500" r="4.700"/><circle cx="147.500" cy="18.500" r="4.700"/></g><circle cx="136.500" cy="18.500" r="2.400" fill="#f7f7f8"/><circle cx="147.500" cy="18.500" r="2.400" fill="#f7f7f8"/>
<!-- printer -->
<g id="prn"><path d="M168.500 11h17a1.500 1.500 0 0 1 1.500 1.500v8h-3.500v-4h-13v4h-3.500v-8a1.500 1.500 0 0 1 1.500-1.500z" fill="#505050"/><path d="M171.500 5.800h11v5h-11z M171.500 17.500h11v6h-11z" fill="none" stroke="#505050" stroke-width="1.500"/></g>
<!-- quick print -->
<path d="M195 11h17a1.500 1.500 0 0 1 1.500 1.500v8h-3.500v-4h-13v4h-3.500v-8a1.500 1.500 0 0 1 1.500-1.500z" fill="#505050"/><path d="M198 5.800h11v5h-11z M198 17.500h11v6h-11z" fill="none" stroke="#505050" stroke-width="1.500"/><path d="M213.800 14.500l-6.300 7h3.600l-2.600 5.500 7.800-7.500h-3.700l2.700-5z" fill="#e09a55" stroke="#f7f7f8" stroke-width=".7"/>
<!-- grid -->
<path d="M225 6.200h16v18h-16z" fill="none" stroke="#555" stroke-width="1.400"/><path d="M230 6.200v18M236 6.200v18M225 10.700h16M225 19.700h16" stroke="#3e7ac4" stroke-width="1.400" fill="none"/>
<!-- scale -->
<path d="M251.500 6h19v18.500h-19z" fill="none" stroke="#444" stroke-width="1.400"/><path d="M256.500 11l9 8.500" stroke="#2f6db8" stroke-width="1.700"/><path d="M254.500 9h5.500l-5.500 5.500z M267.500 21.500h-5.500l5.500-5.500z" fill="#2f6db8"/>
<!-- nav (disabled) -->
<g fill="#b4c6dc"><rect x="287" y="8.500" width="2.300" height="13.500"/><path d="M303 8.500v13.500l-12-6.750z"/><path d="M327.500 8.500v13.500l-11.500-6.750z"/><path d="M347 8.500v13.500l11.500-6.750z"/><path d="M370 8.500v13.500l12-6.750z"/><rect x="383.500" y="8.500" width="2.300" height="13.500"/></g>
<!-- compass -->
<circle cx="406.500" cy="15.200" r="8.800" fill="#fbfcfe" stroke="#3a6db3" stroke-width="1.500"/><path d="M411 9.700l-6.300 3.700 3.600 3.600z" fill="#d9503f"/><path d="M402 20.700l6.300-3.700-3.600-3.600z" fill="#3a6db3"/>
<!-- zoom out -->
<g fill="none" stroke="#555" stroke-width="1.500"><circle cx="439.500" cy="13" r="5.600"/><path d="M443.800 17.300l6 6" stroke-width="2"/><path d="M436.700 13h5.600" stroke-width="1.300"/></g>
<!-- zoom -->
<g fill="none" stroke="#555" stroke-width="1.500"><circle cx="466.500" cy="13" r="6.800"/><path d="M471.500 18l6 6" stroke-width="2"/></g><path d="M485.500 14h5l-2.500 3z" fill="#444"/>
<!-- zoom in -->
<g fill="none" stroke="#555" stroke-width="1.500"><circle cx="506" cy="13" r="5.600"/><path d="M510.300 17.300l6 6" stroke-width="2"/><path d="M503.200 13h5.600M506 10.200v5.600" stroke-width="1.300"/></g>
<!-- page -->
<path d="M535.500 8.500h8.500l4.500 4.500v10.500h-13z" fill="#fdfdfd" stroke="#555" stroke-width="1.300"/><path d="M538 14.500h8M538 17h8M538 19.500h8" stroke="#666" stroke-width="1"/><path d="M558.500 14h5l-2.500 3z" fill="#444"/>
<!-- continuous (active) -->
<rect x="567" y="2" width="27" height="26.500" fill="#b8b8b8"/><g fill="none" stroke="#666" stroke-width="1.400"><path d="M573.500 5.500v6.500h14v-6.500"/><path d="M573.500 24.300v-8.700h9.500l4.500 4v4.700z"/><path d="M583 15.600v4h4.500"/></g>
<!-- multi (disabled) -->
<g fill="none" stroke="#d2d2d2" stroke-width="1.200"><path d="M609.500 4.500h4l2.500 2.500v5.500h-6.500z"/><path d="M599.500 16.500h4l2.500 2.500v5.500h-6.500z"/><path d="M609.500 16.500h4l2.500 2.500v5.500h-6.500z"/></g>
<!-- export -->
<path d="M638.500 7h8.500l4.500 4.500v12.500h-13z" fill="#fdfdfd" stroke="#555" stroke-width="1.300"/><path d="M634.500 17h9" stroke="#3a9a72" stroke-width="1.400"/><path d="M641 13.800l3.300 3.200-3.300 3.200" fill="none" stroke="#3a9a72" stroke-width="1.400"/><path d="M659.500 14h5l-2.500 3z" fill="#444"/>
<!-- mail -->
<path d="M673.500 10h16.500v11.500h-16.500z" fill="#fdfdfd" stroke="#555" stroke-width="1.300"/><path d="M673.500 10l8.250 6.500 8.250-6.500M673.500 21.500l6-6.500M690 21.500l-6-6.500" fill="none" stroke="#555" stroke-width="1.100"/><path d="M698.500 14h5l-2.500 3z" fill="#444"/>
<!-- watermark -->
<path d="M711.500 6h11.500l5.500 5.500v13.500h-17z" fill="#fdfdfd" stroke="#555" stroke-width="1.300"/><path d="M713 13l7-6M713 17l10-9M713 21l13.500-12M714 24l13-11.500M718 24l9-8M722.500 24l4.500-4" stroke="#4f86c9" stroke-width="1.400"/>
</svg>
<div class="a" style="left:240px;top:89px;width:581px;height:461px;background:#fff;border-left:1px solid #4db2f2;border-top:1px solid #5f94be;border-right:1px solid #777"></div>
<div class="a" style="left:261px;top:90px;width:1px;height:460px;background:transparent;border-left:1px dashed #c4c4c4"></div>
<div class="a" style="left:800px;top:90px;width:1px;height:460px;background:transparent;border-left:1px dashed #e6e6e6"></div>
<div class="a" style="left:241px;top:103px;width:579px;height:1px;background:transparent;background-image:repeating-linear-gradient(90deg,#d2d2d2 0 4px,transparent 4px 7px)"></div>
<svg style="left:261.300px;top:103px" width="65.200" height="36.700" viewBox="0 0 1040 585" preserveAspectRatio="none">
<rect width="1040" height="585" fill="#1b100c"/>
<path d="M0 355L340 380V505L0 470z" fill="#8a4a20"/><path d="M0 355L340 380V420L0 395z" fill="#70391a"/>
<path d="M560 500L1040 470V585H560z" fill="#a35d2c"/>
<path d="M0 468L340 503V585H0z" fill="#e2e2e2"/>
<path d="M600 0H1040V200Q960 262 880 305Q770 190 600 0z" fill="#e6e0cc"/>
<path d="M860 0h60v18h-60z" fill="#3a2a22"/>
<rect x="748" y="330" width="40" height="255" fill="#9b9b9b" opacity=".6"/>
<path d="M45 175Q110 340 285 585H525Q700 430 865 255z" fill="#dcd8c6"/>
<path d="M45 175Q110 340 285 585H330Q170 360 90 190z" fill="#c9c5b2"/>
<ellipse cx="450" cy="238" rx="392" ry="158" transform="rotate(6 450 238)" fill="#f7f3ea"/>
<path d="M48 200Q40 70 300 22" fill="none" stroke="#6e6e6e" stroke-width="16"/>
<path d="M345 0h55v60h-55z" fill="#b9b9b9" opacity=".5"/>
<path d="M300 22Q620 -10 800 150Q880 215 870 265" fill="none" stroke="#8d8d8d" stroke-width="10"/>
<ellipse cx="470" cy="255" rx="66" ry="36" transform="rotate(28 470 255)" fill="#5b3020"/>
<g fill="#6a3a26"><circle cx="300" cy="250" r="12"/><circle cx="280" cy="300" r="10"/><circle cx="620" cy="280" r="12"/><circle cx="640" cy="210" r="9"/><circle cx="400" cy="170" r="10"/><circle cx="560" cy="190" r="10"/><circle cx="480" cy="340" r="11"/><circle cx="330" cy="215" r="8"/></g>
</svg>
<div class="t" style="top:104.6px;font-size:9px;color:#1f2340;left:523.5px;transform:scaleX(0.902);transform-origin:0 50%;">ALWAZONSALE</div>
<div class="t" style="top:115.7px;font-size:9px;color:#1f2340;left:523.5px;transform:scaleX(0.902);transform-origin:0 50%;">15 Pearlman DR</div>
<div class="t" style="top:127.3px;font-size:9px;color:#1f2340;left:523.5px;transform:scaleX(0.913);transform-origin:0 50%;">Spring Valley, NY, 10977, US</div>
<div class="t" style="top:104.6px;font-size:9px;color:#1f2340;font-weight:bold;left:665.0px;transform:scaleX(0.900);transform-origin:0 50%;">P:</div>
<div class="t" style="top:104.6px;font-size:9px;color:#1f2340;left:674.5px;transform:scaleX(0.909);transform-origin:0 50%;">1234567890</div>
<div class="t" style="top:116.3px;font-size:9px;color:#1f2340;font-weight:bold;left:665.0px;transform:scaleX(0.900);transform-origin:0 50%;">E:</div>
<div class="t" style="top:116.3px;font-size:9px;color:#1f2340;left:674.6px;transform:scaleX(0.951);transform-origin:0 50%;">office@squid.com</div>
<div class="t" style="top:127.6px;font-size:9px;color:#1f2340;font-weight:bold;left:665.0px;transform:scaleX(0.900);transform-origin:0 50%;">F:</div>
<div class="t" style="top:127.6px;font-size:9px;color:#1f2340;left:674.0px;transform:scaleX(0.962);transform-origin:0 50%;">718-215-1111</div>
<div class="a" style="left:261px;top:144px;width:539px;height:1px;background:#d9d9d9;"></div>
<div class="a" style="left:261px;top:160px;width:539px;height:1px;background:#e3e3e3;"></div>
<div class="t" style="top:147.6px;font-size:9.1px;color:#1c1c1c;font-weight:bold;left:259.5px;transform:scaleX(0.975);transform-origin:0 50%;">Invoice I-0047728</div>
<div class="t" style="top:147.6px;font-size:9.1px;color:#1c1c1c;font-weight:bold;left:357.5px;transform:scaleX(0.868);transform-origin:0 50%;">Customer:</div>
<div class="t" style="top:147.6px;font-size:9px;color:#1c1c1c;left:399.5px;">0</div>
<div class="t" style="top:147.6px;font-size:9px;color:#1c1c1c;right:566.3px;transform:scaleX(0.913);transform-origin:100% 50%;">Page 1 of 1</div>
<svg style="left:255px;top:165px" width="170" height="35" viewBox="0 0 1366 281" fill="#0a0a0a"><rect x="62" y="62" width="20" height="163"/><rect x="88" y="62" width="12" height="163"/><rect x="143" y="62" width="17" height="163"/><rect x="178" y="62" width="14" height="163"/><rect x="215" y="62" width="28" height="163"/><rect x="255" y="62" width="23" height="163"/><rect x="298" y="62" width="24" height="163"/><rect x="345" y="62" width="33" height="163"/><rect x="385" y="62" width="13" height="163"/><rect x="418" y="62" width="14" height="163"/><rect x="452" y="62" width="38" height="163"/><rect x="505" y="62" width="25" height="163"/><rect x="538" y="62" width="40" height="163"/><rect x="587" y="62" width="23" height="163"/><rect x="620" y="62" width="30" height="163"/><rect x="658" y="62" width="14" height="163"/><rect x="695" y="62" width="35" height="163"/><rect x="752" y="62" width="18" height="163"/><rect x="780" y="62" width="35" height="163"/><rect x="835" y="62" width="15" height="163"/><rect x="860" y="62" width="22" height="163"/><rect x="907" y="62" width="25" height="163"/><rect x="945" y="62" width="25" height="163"/><rect x="980" y="62" width="32" height="163"/><rect x="1025" y="62" width="11" height="163"/><rect x="1052" y="62" width="48" height="163"/><rect x="1110" y="62" width="15" height="163"/><rect x="1148" y="62" width="22" height="163"/><rect x="1197" y="62" width="38" height="163"/><rect x="1243" y="62" width="12" height="163"/><rect x="1265" y="62" width="25" height="163"/></svg>
<div class="t" style="top:201.0px;font-size:14px;color:#151515;font-weight:bold;left:260.5px;transform:scaleX(1.033);transform-origin:0 50%;">Invoice I-0047728</div>
<div class="a" style="left:261px;top:224px;width:264px;height:100px;background:#fff;border:1px solid #d9d9d9"></div>
<div class="a" style="left:262px;top:225px;width:262px;height:18px;background:#f3f3f3;"></div>
<div class="t" style="top:229.6px;font-size:9.1px;color:#1c1c1c;font-weight:bold;left:266.4px;transform:scaleX(0.930);transform-origin:0 50%;">Bill to</div>
<div class="t" style="top:249.2px;font-size:9px;color:#1f2340;left:266.4px;transform:scaleX(0.879);transform-origin:0 50%;">10</div>
<div class="t" style="top:260.5px;font-size:9px;color:#1f2340;left:266.4px;transform:scaleX(0.930);transform-origin:0 50%;">55 Fruit Street</div>
<div class="t" style="top:271.9px;font-size:9px;color:#1f2340;left:266.4px;transform:scaleX(0.879);transform-origin:0 50%;">44</div>
<div class="t" style="top:283.2px;font-size:9px;color:#1f2340;left:266.4px;transform:scaleX(0.910);transform-origin:0 50%;">Boston, MA, 02114, US,</div>
<div class="t" style="top:294.6px;font-size:9px;color:#1f2340;left:266.4px;">tel: 1111111111,</div>
<div class="t" style="top:305.9px;font-size:9px;color:#1f2340;left:266.4px;transform:scaleX(0.972);transform-origin:0 50%;">1111</div>
<div class="a" style="left:536px;top:224px;width:264px;height:100px;background:#fff;border:1px solid #d9d9d9"></div>
<div class="a" style="left:537px;top:225px;width:262px;height:18px;background:#f3f3f3;"></div>
<div class="t" style="top:229.6px;font-size:9.1px;color:#1c1c1c;font-weight:bold;left:541.4px;transform:scaleX(0.930);transform-origin:0 50%;">Ship to</div>
<div class="t" style="top:249.2px;font-size:9px;color:#1f2340;left:541.4px;transform:scaleX(0.879);transform-origin:0 50%;">0</div>
<div class="t" style="top:260.5px;font-size:9px;color:#1f2340;left:541.4px;transform:scaleX(0.925);transform-origin:0 50%;">606 West 57th Street</div>
<div class="t" style="top:271.9px;font-size:9px;color:#1f2340;left:541.4px;transform:scaleX(0.879);transform-origin:0 50%;">10</div>
<div class="t" style="top:283.2px;font-size:9px;color:#1f2340;left:541.4px;transform:scaleX(0.900);transform-origin:0 50%;">New York, NY, 10019, US,</div>
<div class="t" style="top:294.6px;font-size:9px;color:#1f2340;left:541.4px;transform:scaleX(0.922);transform-origin:0 50%;">tel: 111,</div>
<div class="t" style="top:305.9px;font-size:9px;color:#1f2340;left:541.4px;transform:scaleX(0.853);transform-origin:0 50%;">222</div>
<div class="a" style="left:261px;top:336px;width:539px;height:44px;background:#fff;border:1px solid #d9d9d9"></div>
<div class="a" style="left:262px;top:337px;width:537px;height:19px;background:#f3f3f3;"></div>
<div class="a" style="left:357px;top:337px;width:1px;height:42px;background:#d9d9d9;"></div>
<div class="a" style="left:454px;top:337px;width:1px;height:42px;background:#d9d9d9;"></div>
<div class="a" style="left:573px;top:337px;width:1px;height:42px;background:#d9d9d9;"></div>
<div class="a" style="left:681px;top:337px;width:1px;height:42px;background:#d9d9d9;"></div>
<div class="t" style="top:342.0px;font-size:9.1px;color:#1c1c1c;font-weight:bold;left:266.4px;transform:scaleX(0.913);transform-origin:0 50%;">Date</div>
<div class="t" style="top:342.0px;font-size:9.1px;color:#1c1c1c;font-weight:bold;left:363.0px;transform:scaleX(0.938);transform-origin:0 50%;">Due Date</div>
<div class="t" style="top:342.0px;font-size:9.1px;color:#1c1c1c;font-weight:bold;left:460.3px;transform:scaleX(0.902);transform-origin:0 50%;">Rep</div>
<div class="t" style="top:342.0px;font-size:9.1px;color:#1c1c1c;font-weight:bold;left:579.5px;transform:scaleX(0.844);transform-origin:0 50%;">PO #</div>
<div class="t" style="top:342.0px;font-size:9.1px;color:#1c1c1c;font-weight:bold;left:687.4px;transform:scaleX(0.931);transform-origin:0 50%;">Terms</div>
<div class="t" style="top:362.6px;font-size:9px;color:#1f2340;left:266.4px;transform:scaleX(0.973);transform-origin:0 50%;">09/30/2021</div>
<div class="t" style="top:362.6px;font-size:9px;color:#1f2340;left:363.0px;transform:scaleX(0.973);transform-origin:0 50%;">09/30/2021</div>
<div class="t" style="top:362.6px;font-size:9px;color:#1f2340;left:460.3px;transform:scaleX(0.949);transform-origin:0 50%;">test 11</div>
<div class="a" style="left:261px;top:392.5px;width:539px;height:18.5px;background:#0b4e8a;"></div>
<div class="a" style="left:282px;top:393px;width:1px;height:18px;background:#8fb0d0;"></div>
<div class="a" style="left:318px;top:393px;width:1px;height:18px;background:#8fb0d0;"></div>
<div class="a" style="left:400px;top:393px;width:1px;height:18px;background:#8fb0d0;"></div>
<div class="a" style="left:599px;top:393px;width:1px;height:18px;background:#8fb0d0;"></div>
<div class="a" style="left:652px;top:393px;width:1px;height:18px;background:#8fb0d0;"></div>
<div class="a" style="left:686px;top:393px;width:1px;height:18px;background:#8fb0d0;"></div>
<div class="a" style="left:743px;top:393px;width:1px;height:18px;background:#8fb0d0;"></div>
<div class="t" style="top:398.2px;font-size:9px;color:#fff;font-weight:bold;left:267.8px;">#</div>
<div class="t" style="top:398.2px;font-size:9px;color:#fff;font-weight:bold;left:287.2px;transform:scaleX(0.973);transform-origin:0 50%;">Image</div>
<div class="t" style="top:398.2px;font-size:9px;color:#fff;font-weight:bold;left:324.6px;transform:scaleX(1.027);transform-origin:0 50%;">Item</div>
<div class="t" style="top:398.2px;font-size:9px;color:#fff;font-weight:bold;left:406.4px;transform:scaleX(0.929);transform-origin:0 50%;">Description</div>
<div class="t" style="top:398.2px;font-size:9px;color:#fff;font-weight:bold;left:618.0px;transform:scaleX(0.950);transform-origin:50% 50%;">Qty</div>
<div class="t" style="top:398.2px;font-size:9px;color:#fff;font-weight:bold;left:662.0px;transform:scaleX(0.950);transform-origin:50% 50%;">UM</div>
<div class="t" style="top:398.2px;font-size:9px;color:#fff;font-weight:bold;left:704.2px;transform:scaleX(0.930);transform-origin:50% 50%;">Rate</div>
<div class="t" style="top:398.2px;font-size:9px;color:#fff;font-weight:bold;left:754.6px;transform:scaleX(0.930);transform-origin:50% 50%;">Amount</div>
<div class="a" style="left:261px;top:411px;width:1px;height:54px;background:#d9d9d9;"></div>
<div class="a" style="left:282px;top:411px;width:1px;height:54px;background:#d9d9d9;"></div>
<div class="a" style="left:318px;top:411px;width:1px;height:54px;background:#d9d9d9;"></div>
<div class="a" style="left:400px;top:411px;width:1px;height:54px;background:#d9d9d9;"></div>
<div class="a" style="left:599px;top:411px;width:1px;height:54px;background:#d9d9d9;"></div>
<div class="a" style="left:652px;top:411px;width:1px;height:54px;background:#d9d9d9;"></div>
<div class="a" style="left:686px;top:411px;width:1px;height:54px;background:#d9d9d9;"></div>
<div class="a" style="left:743px;top:411px;width:1px;height:54px;background:#d9d9d9;"></div>
<div class="a" style="left:261px;top:465px;width:539px;height:1px;background:#d9d9d9;"></div>
<div class="t" style="top:434.2px;font-size:9px;color:#2a4f80;left:269.5px;">1</div>
<svg style="left:284px;top:413px" width="33" height="33" viewBox="0 0 315 315"><rect width="315" height="315" fill="#dcdcdc"/><path d="M120 225h85v90h-32l-8-50-8 50h-37z" fill="#3f3f45"/><path d="M95 135q10-22 40-22h40q40 0 58 30l-8 40-22-8v52h-85v-55l-12 10-14-8z" fill="#f0dc28"/><path d="M97 178l12 6-4 40-12-2z M212 176l14 6 2 34-12 4z" fill="#d9a58a"/><ellipse cx="140" cy="72" rx="29" ry="33" fill="#dba98d"/><path d="M104 62q-6-42 36-46q40 0 36 34q-20-14-44-6q-16 6-28 18z" fill="#8a5a3a"/></svg>
<div class="t" style="top:420.1px;font-size:9px;color:#1f2340;left:325.3px;transform:scaleX(0.919);transform-origin:0 50%;">00000</div>
<div class="t" style="top:431.3px;font-size:9px;color:#1f2340;left:325.3px;transform:scaleX(0.924);transform-origin:0 50%;">490330163092</div>
<div class="t" style="top:419.4px;font-size:9px;color:#1f2340;left:406.4px;transform:scaleX(0.914);transform-origin:0 50%;">Toddler Boys' Short Sleeve T-Shirt - Cat &amp; Jack</div>
<div class="t" style="top:430.8px;font-size:9px;color:#1f2340;left:406.4px;transform:scaleX(0.897);transform-origin:0 50%;">Yellow 2T</div>
<div class="t" style="top:442.3px;font-size:9px;color:#1f2340;left:406.4px;transform:scaleX(0.956);transform-origin:0 50%;">Note: internal note for test</div>
<div class="t" style="top:419.0px;font-size:9px;color:#2b5c9e;right:719.8px;">1</div>
<div class="t" style="top:419.6px;font-size:9px;color:#1c1c24;left:657.6px;transform:scaleX(0.859);transform-origin:0 50%;">ea</div>
<div class="t" style="top:419.2px;font-size:9px;color:#1c1c24;right:628.8px;transform:scaleX(0.938);transform-origin:100% 50%;">$10.00</div>
<div class="t" style="top:419.2px;font-size:9px;color:#1c1c24;right:571.6px;transform:scaleX(0.923);transform-origin:100% 50%;">$10.00</div>
<div class="t" style="top:479.2px;font-size:8.8px;color:#34343a;font-weight:bold;right:651.0px;transform:scaleX(0.939);transform-origin:100% 50%;">Subtotal:</div>
<div class="t" style="top:479.2px;font-size:8.8px;color:#34343a;font-weight:bold;right:566.0px;transform:scaleX(0.981);transform-origin:100% 50%;">$10.00</div>
<div class="t" style="top:494.1px;font-size:8.8px;color:#34343a;font-weight:bold;right:651.0px;transform:scaleX(0.945);transform-origin:100% 50%;">NYS (8.875%):</div>
<div class="t" style="top:494.1px;font-size:8.8px;color:#34343a;font-weight:bold;right:566.0px;transform:scaleX(0.985);transform-origin:100% 50%;">$0.89</div>
<div class="t" style="top:509.0px;font-size:8.8px;color:#34343a;font-weight:bold;right:651.0px;transform:scaleX(0.932);transform-origin:100% 50%;">TOTAL (USD):</div>
<div class="t" style="top:509.0px;font-size:8.8px;color:#34343a;font-weight:bold;right:566.0px;transform:scaleX(0.981);transform-origin:100% 50%;">$10.89</div>
<div class="t" style="top:523.9px;font-size:8.8px;color:#34343a;font-weight:bold;right:651.0px;transform:scaleX(0.907);transform-origin:100% 50%;">Amount Paid:</div>
<div class="t" style="top:523.9px;font-size:8.8px;color:#34343a;font-weight:bold;right:566.0px;transform:scaleX(0.981);transform-origin:100% 50%;">$10.89</div>
<div class="t" style="top:538.8px;font-size:8.8px;color:#34343a;font-weight:bold;right:651.0px;transform:scaleX(0.849);transform-origin:100% 50%;">Cash 1:</div>
<div class="t" style="top:538.8px;font-size:8.8px;color:#34343a;font-weight:bold;right:566.0px;transform:scaleX(0.981);transform-origin:100% 50%;">$10.89</div>
<div class="a" style="left:19px;top:549px;width:1024px;height:22.7px;background:#f7f7f8;"></div>
<div class="a" style="left:23px;top:550px;width:1016px;height:18px;background:#f0f0f1;border-top:1px solid #d6d6d6"></div>
<div class="t" style="top:555.9px;font-size:9.6px;color:#3a3a3a;left:25.8px;transform:scaleX(0.789);transform-origin:0 50%;">Page:</div>
<div class="a" style="left:47.8px;top:553.2px;width:20.8px;height:12.6px;background:#fff;border:1px solid #bdbdbd"></div>
<div class="t" style="top:555.8px;font-size:9.4px;color:#3a3a3a;left:55.6px;transform:scaleX(0.900);transform-origin:50% 50%;">1</div>
<div class="t" style="top:555.9px;font-size:9.6px;color:#3a3a3a;left:71.0px;transform:scaleX(0.955);transform-origin:0 50%;">/ 1</div>
<div class="t" style="top:556.1px;font-size:9.2px;color:#33547a;left:907.4px;transform:scaleX(0.833);transform-origin:0 50%;">100%</div>
<div class="a" style="left:932.4px;top:557.8px;width:5.4px;height:1px;background:#333;"></div>
<div class="a" style="left:941.3px;top:557.8px;width:82.4px;height:1px;background:#a9a9a9;"></div>
<div class="a" style="left:943.3px;top:564.3px;width:1px;height:1px;background:#999;"></div>
<div class="a" style="left:1021.7px;top:564.3px;width:1px;height:1px;background:#aaa;"></div>
<div class="a" style="left:981.2px;top:553.8px;width:3.8px;height:9px;background:#303030;"></div>
<div class="a" style="left:1027.3px;top:557.8px;width:5.6px;height:1px;background:#2a2a2a;"></div>
<div class="a" style="left:1029.6px;top:555.5px;width:1px;height:5.6px;background:#2a2a2a;"></div>
<svg style="left:435px;top:160px" width="12" height="17" viewBox="0 0 12 17"><path d="M1.500 1.500v11.500l2.700-2.500 2 4.500 1.700-.800-2-4.300h3.700z" fill="#fff" stroke="#222" stroke-width=".9" stroke-linejoin="round"/></svg>
</body>
</html>
